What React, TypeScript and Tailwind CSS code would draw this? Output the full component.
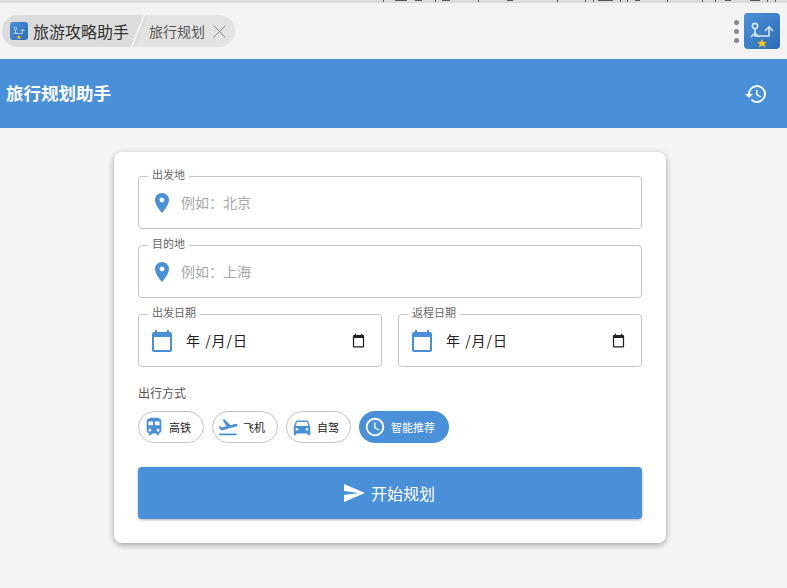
import React from 'react';
import { MdLocationOn, MdCalendarToday, MdTrain, MdFlightTakeoff, MdDirectionsCar, MdAccessTime, MdSend, MdHistory } from 'react-icons/md';

const font = { fontFamily: '"Noto Sans CJK SC", "Liberation Sans", sans-serif' };

const AppLogo: React.FC<{ size: number; rounded?: string }> = ({ size, rounded = 'rounded-[3px]' }) => (
  <div className={`bg-gradient-to-br from-[#4a90d9] to-[#2f6db5] ${rounded} shrink-0`} style={{ width: size, height: size }}>
    <svg viewBox="0 0 36 36" width={size} height={size} fill="none" stroke="#d5e6f8" strokeWidth="1.6">
      <circle cx="11" cy="13" r="2.6" />
      <path d="M11 16v7h14v-8" />
      <path d="M7 24l4-4 4 4M21 18l4-4 4 4" />
      <path d="M18 26l1.5 3h3.3l-2.5 2.2 1 3.3-3.3-1.9-3.3 1.9 1-3.3-2.5-2.2h3.3z" fill="#f5c518" stroke="none" />
    </svg>
  </div>
);

const TextField: React.FC<{ label: string; placeholder: string }> = ({ label, placeholder }) => (
  <div className="relative h-[53px] border border-[#c4c4c4] rounded flex items-center pl-[11px]">
    <span className="absolute left-[9px] -top-[11px] bg-white px-1 text-[11px] leading-[16px] text-[#666]">{label}</span>
    <MdLocationOn className="text-[#4a90d9] w-6 h-6 shrink-0" />
    <span className="ml-[7px] -mt-[2px] text-sm text-[#a8a8a8]">{placeholder}</span>
  </div>
);

const DateField: React.FC<{ label: string }> = ({ label }) => (
  <div className="relative h-[53px] border border-[#c4c4c4] rounded flex items-center pl-[11px] pr-[15px]">
    <span className="absolute left-[9px] -top-[11px] bg-white px-1 text-[11px] leading-[16px] text-[#666]">{label}</span>
    <MdCalendarToday className="text-[#4a90d9] w-[24px] h-[24px] shrink-0" />
    <span className="ml-[12px] -mt-px text-sm tracking-[1px] text-[#222] flex-1">年 /月/日</span>
    <svg viewBox="0 0 24 24" className="w-[15px] h-[15px] shrink-0" fill="#222">
      <path d="M19 3h-1V1h-2v2H8V1H6v2H5a2 2 0 0 0-2 2v16a2 2 0 0 0 2 2h14a2 2 0 0 0 2-2V5a2 2 0 0 0-2-2zm0 18H5V8h14z" />
    </svg>
  </div>
);

const Chip: React.FC<{ label: string; icon: React.ReactNode; width: string }> = ({ label, icon, width }) => (
  <div className={`${width} h-8 rounded-full border border-[#c4c4c4] flex items-center pl-[4px] gap-[4px] text-[11px] text-[#222]`}>
    {icon}
    <span>{label}</span>
  </div>
);

export default function App() {
  return (
    <div className="relative h-[588px] w-[787px] overflow-hidden bg-[#f5f5f5] flex flex-col" style={font}>
      {/* bits of the window behind, cut off at the top edge */}
      <svg className="absolute left-0 top-0" width="787" height="3" fill="#555">
        <path d="M383 0h1v2h-1zM395 0h12v1h-12zM415 0h7v1h-7zM435 0h1v2h-1zM442 0h8v1h-8zM478 0h1v2h-1zM507 0h6v1h-6zM557 0h1v2h-1zM585 0h1v2h-1zM593 0h1v2h-1zM598 0h15v1h-15zM620 0h1v2h-1zM627 0h1v2h-1zM635 0h5v1h-5zM667 0h1v2h-1zM702 0h1v2h-1zM715 0h1v2h-1zM725 0h6v1h-6zM750 0h10v1h-10zM767 0h1v2h-1zM775 0h1v2h-1z" />
      </svg>

      {/* browser tab strip */}
      <div className="h-[59px] bg-[#f3f3f3] border-t-[3px] border-[#dcdcdc] flex items-center justify-between pl-[2px] pr-[7px] shrink-0">
        <div className="relative h-8 w-[233px] rounded-full bg-[#e3e3e3] overflow-hidden flex items-center">
          <div className="absolute -left-[6px] top-0 h-8 w-[146px] bg-[#dcdcdc] -skew-x-[22deg]" />
          <div className="absolute left-[135px] top-0 h-8 w-[2px] bg-[#f3f3f3] -skew-x-[22deg]" />
          <div className="relative flex items-center pl-2 w-[147px]">
            <AppLogo size={18} />
            <span className="ml-[5px] text-base text-[#333] leading-none">旅游攻略助手</span>
          </div>
          <span className="relative text-sm text-[#555]">旅行规划</span>
          <svg className="relative ml-[8px]" width="13" height="13" viewBox="0 0 13 13" stroke="#888" strokeWidth="1" fill="none">
            <path d="M0.5 0.5l12 12M12.5 0.5l-12 12" />
          </svg>
        </div>
        <div className="flex items-center gap-[5px]">
          <div className="flex flex-col gap-[4px]">
            <span className="w-[5px] h-[5px] rounded-full bg-[#888]" />
            <span className="w-[5px] h-[5px] rounded-full bg-[#888]" />
            <span className="w-[5px] h-[5px] rounded-full bg-[#888]" />
          </div>
          <AppLogo size={36} rounded="rounded-[4px]" />
        </div>
      </div>

      {/* header */}
      <header className="h-[69px] bg-[#4a90d9] flex items-center justify-between pl-[6px] pr-[19px] shrink-0">
        <h1 className="-mt-px text-[17.5px] font-bold text-white">旅行规划助手</h1>
        <MdHistory className="w-6 h-6 text-white" />
      </header>

      {/* form card */}
      <main className="pt-6 pr-[7px] flex justify-center">
        <div className="w-[552px] h-[391px] bg-white rounded-lg p-6 shadow-[0_2px_6px_rgba(0,0,0,0.35)]">
          <div className="flex flex-col gap-4">
            <TextField label="出发地" placeholder="例如：北京" />
            <TextField label="目的地" placeholder="例如：上海" />
            <div className="grid grid-cols-2 gap-4">
              <DateField label="出发日期" />
              <DateField label="返程日期" />
            </div>
          </div>
          <p className="mt-[17px] text-xs leading-[18px] text-[#555]">出行方式</p>
          <div className="mt-[9px] flex gap-2">
            <Chip width="w-[66px]" label="高铁" icon={<MdTrain className="w-[22px] h-[22px] text-[#4a90d9]" />} />
            <Chip width="w-[66px]" label="飞机" icon={<MdFlightTakeoff className="w-[22px] h-[22px] text-[#4a90d9]" />} />
            <Chip width="w-[65px]" label="自驾" icon={<MdDirectionsCar className="w-[22px] h-[22px] text-[#4a90d9]" />} />
            <div className="w-[90px] h-8 rounded-full bg-[#4a90d9] flex items-center pl-[5px] gap-[5px] text-[11px] text-white">
              <MdAccessTime className="w-[22px] h-[22px]" />
              <span>智能推荐</span>
            </div>
          </div>
          <button className="mt-6 w-full h-[52px] pr-[3px] rounded bg-[#4a90d9] shadow-[0_1px_3px_rgba(0,0,0,0.3)] flex items-center justify-center gap-[5px] text-base text-white">
            <MdSend className="w-6 h-6" />
            开始规划
          </button>
        </div>
      </main>
    </div>
  );
}
